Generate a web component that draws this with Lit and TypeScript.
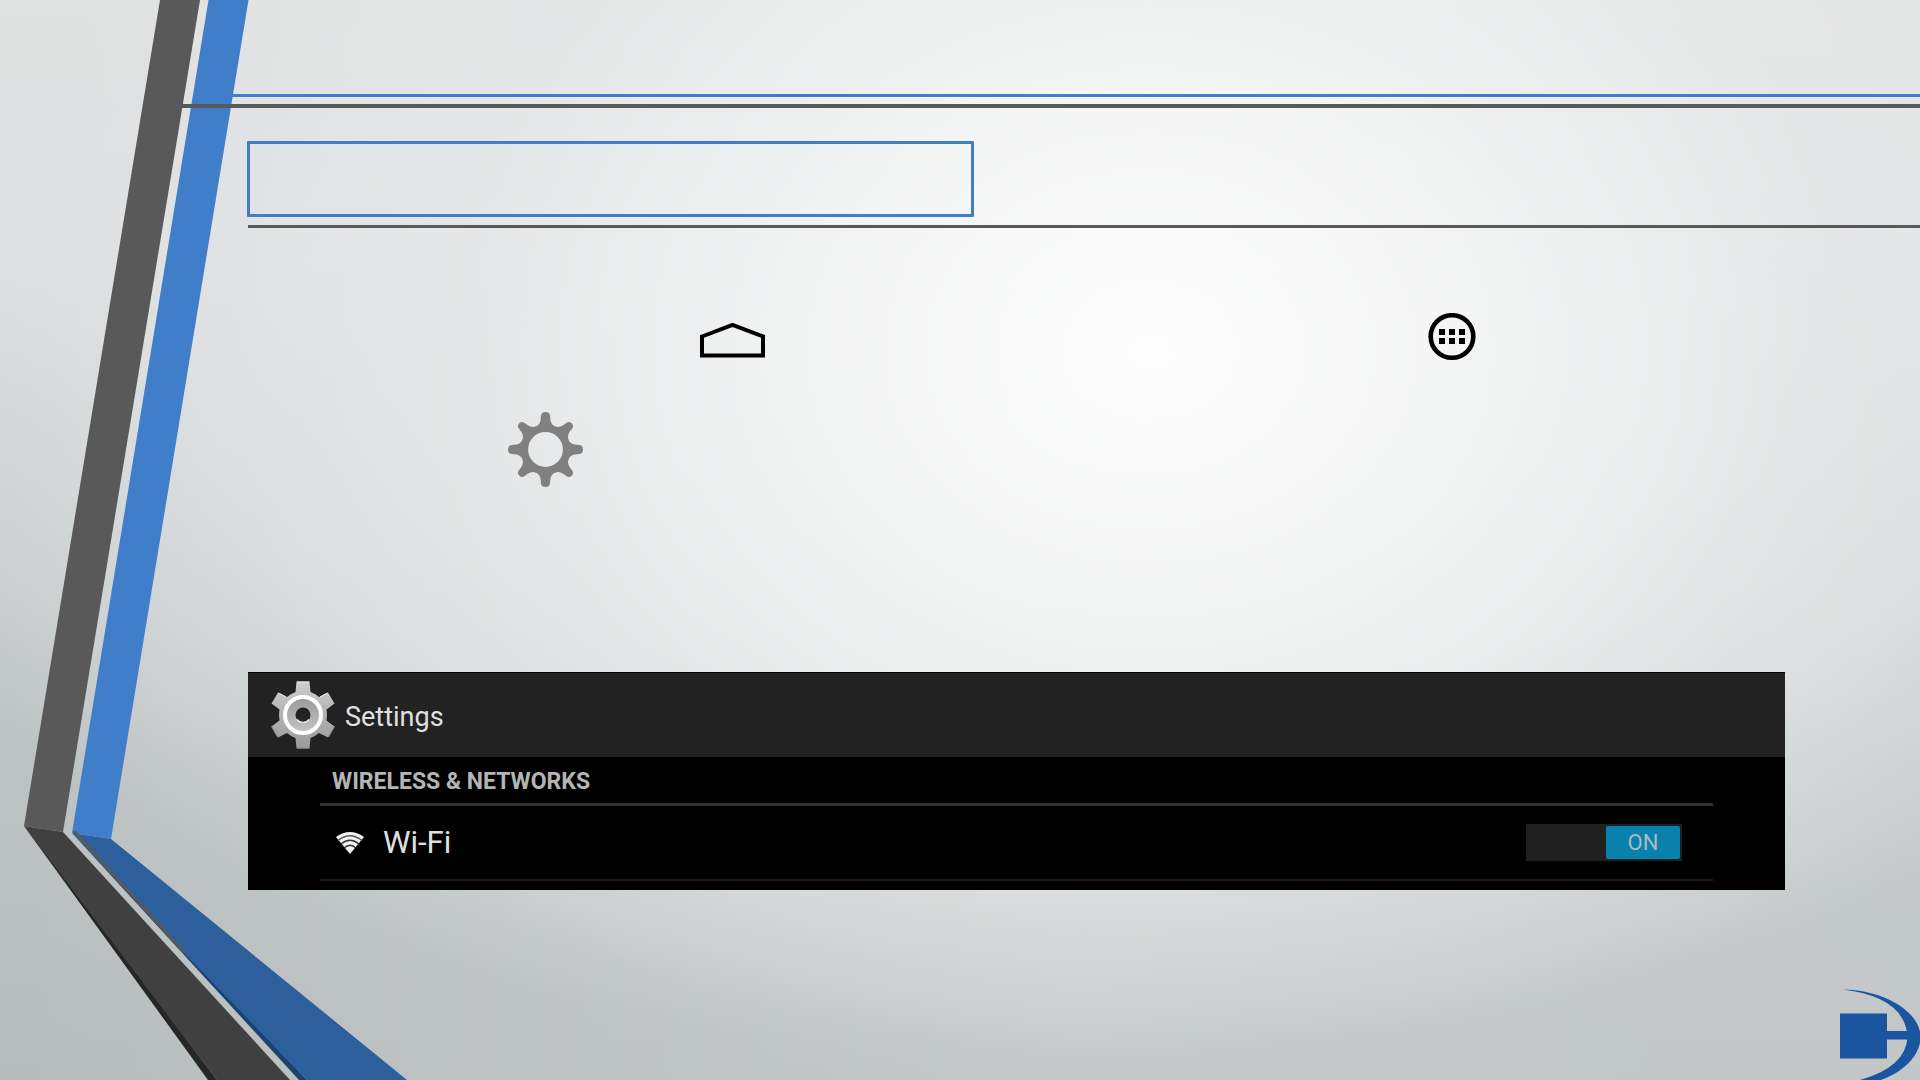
import { LitElement, html, css, svg } from "lit";
import { customElement, state } from "lit/decorators.js";

const RIM_TEETH = [120, 180, 240];
const COG_TEETH = [0, 45, 90, 135, 180, 225, 270, 315];

@customElement("settings-panel")
export class SettingsPanel extends LitElement {
  @state() private wifi = true;

  static styles = css`
    :host {
      display: block;
      background: #000;
      color: #e0e0e0;
      font-family: Roboto, "Liberation Sans", sans-serif;
    }
    .bar {
      display: flex;
      align-items: center;
      gap: 10px;
      height: 84px;
      padding-left: 23px;
      border-top: 1px solid #000;
      background: #222;
    }
    .gear {
      display: block;
      width: 64px;
      height: 68px;
    }
    .title {
      margin: 0;
      padding-top: 4px;
      font-size: 27px;
      line-height: 32px;
      font-weight: 400;
    }
    .list {
      padding: 0 72px 9px;
    }
    .section {
      margin: 0;
      padding: 10px 12px 6px;
      border-bottom: 3px solid #303030;
      color: #b4b4b4;
      font-size: 23px;
      line-height: 30px;
      font-weight: 700;
    }
    .row {
      display: flex;
      align-items: center;
      height: 73px;
      padding: 0 31px 0 16px;
      border-bottom: 2px solid #1c1c1c;
    }
    .wifi {
      display: block;
      width: 28px;
      height: 24px;
    }
    .name {
      flex: 1;
      padding-left: 19px;
      font-size: 31px;
      line-height: 36px;
    }
    .switch {
      display: flex;
      width: 152px;
      height: 33px;
      padding: 2px;
      background: #202020;
      cursor: pointer;
    }
    .switch input {
      appearance: none;
      width: 0;
      height: 0;
      margin: 0;
    }
    .thumb {
      width: 74px;
      border-radius: 2px;
      background: #444;
      color: #a9bac2;
      font-size: 22px;
      line-height: 34px;
      text-align: center;
    }
    .switch input:checked + .thumb {
      margin-left: auto;
      background: #0882ad;
    }
  `;

  private toggle(e: Event) {
    this.wifi = (e.target as HTMLInputElement).checked;
  }

  render() {
    return html`
      <header class="bar">
        <svg class="gear" viewBox="-32 -34 64 68" aria-hidden="true">
          <defs>
            <linearGradient id="steel" gradientUnits="userSpaceOnUse" x1="0" y1="-34" x2="0" y2="34">
              <stop offset="0" stop-color="#cdcdcd" />
              <stop offset="1" stop-color="#999" />
            </linearGradient>
            <linearGradient id="hub" x1="0" y1="0" x2="0" y2="1">
              <stop offset="0" stop-color="#999" />
              <stop offset="1" stop-color="#c4c4c4" />
            </linearGradient>
            <mask id="bore">
              <rect x="-34" y="-34" width="68" height="68" fill="#fff" />
              <circle r="7.5" fill="#000" />
            </mask>
          </defs>
          <g mask="url(#bore)">
            <path
              fill="url(#steel)"
              d="M-6.500-33.500H6.500L7.500-23Q12-21.500 16-18L25-22.500L31.500-11.500L23.500-5.500Q24.500 0 23.500 5.500L31.500 11.500L25 22.500L16 18Q12 21.500 7.500 23L6.500 33.500H-6.500L-7.500 23Q-12 21.500-16 18L-25 22.500L-31.500 11.500L-23.500 5.500Q-24.500 0-23.500-5.500L-31.500-11.500L-25-22.500L-16-18Q-12-21.500-7.500-23Z"
            />
            ${RIM_TEETH.map(
              (a) => svg`<path d="M-6-33H6" stroke="#8c8c8c" stroke-width="1" transform="rotate(${a})" />`
            )}
            <path d="M-6-33H6M-24.500-22L-17-18M24.500-22L17-18" stroke="#eee" stroke-width="1" />
            <circle r="18" fill="url(#hub)" stroke="#fff" stroke-width="4" />
          </g>
          <path d="M-6 4.500A7.500 7.500 0 0 0 6 4.500" fill="none" stroke="#e4e4e4" stroke-width="1.500" />
        </svg>
        <h1 class="title">Settings</h1>
      </header>
      <div class="list">
        <h2 class="section">WIRELESS &amp; NETWORKS</h2>
        <div class="row">
          <svg class="wifi" viewBox="0 0 28 24" aria-hidden="true">
            <path d="M0 6Q14-4 28 6L14 23Z" fill="#f2f2f2" />
            <path d="M2 9.500Q14 0 26 9.500" fill="none" stroke="#555" stroke-width="1.500" />
            <path d="M5 13Q14 5.500 23 13M8 17Q14 11.500 20 17" fill="none" stroke="#333" stroke-width="1.500" />
          </svg>
          <span class="name" id="wifi-name">Wi-Fi</span>
          <label class="switch">
            <input type="checkbox" aria-labelledby="wifi-name" .checked=${this.wifi} @change=${this.toggle} />
            <span class="thumb">${this.wifi ? "ON" : "OFF"}</span>
          </label>
        </div>
      </div>
    `;
  }
}

@customElement("app-root")
export class AppRoot extends LitElement {
  static styles = css`
    :host {
      display: block;
    }
    .slide {
      position: relative;
      display: flex;
      flex-direction: column;
      box-sizing: border-box;
      min-height: 100vh;
      padding-top: 94px;
      overflow: hidden;
      background:
        radial-gradient(
          ellipse 950px 760px at 1150px 350px,
          rgba(255, 255, 255, 0.9) 0%,
          rgba(255, 255, 255, 0.7) 25%,
          rgba(255, 255, 255, 0.4) 47%,
          rgba(255, 255, 255, 0.1) 72%,
          rgba(255, 255, 255, 0) 100%
        ),
        radial-gradient(
          ellipse 1150px 600px at 1080px 430px,
          rgba(227, 229, 230, 1) 0%,
          rgba(227, 229, 230, 0.9) 50%,
          rgba(227, 229, 230, 0.6) 75%,
          rgba(227, 229, 230, 0) 105%
        ),
        linear-gradient(to right, rgba(255, 255, 255, 0), rgba(255, 255, 255, 0.18) 55%, rgba(255, 255, 255, 0.15)),
        linear-gradient(#e0e2e2, #dcdddf 25%, #cbcfcf 46%, #bdc2c2 70%, #b7bcbc);
    }
    .ribbons {
      position: absolute;
      top: 0;
      left: 0;
      width: 410px;
      height: 1080px;
    }
    .rule {
      position: relative;
      flex: none;
      height: 3px;
      background: #595959;
    }
    .rule.accent {
      margin-left: 232px;
      background: #407ec9;
    }
    .rule.heavy {
      height: 4px;
      margin: 7px 0 33px 182px;
    }
    .rule.thin {
      margin: 8px 0 0 248px;
    }
    .caption {
      box-sizing: border-box;
      width: 727px;
      height: 76px;
      margin-left: 247px;
      border: 3px solid #407ec9;
      border-radius: 1px;
    }
    .steps {
      display: flex;
      flex-direction: column;
      gap: 51px;
      padding: 85px 0 185px;
    }
    .step {
      display: flex;
      align-items: center;
      gap: 663px;
      padding-left: 700px;
    }
    .step.second {
      padding-left: 508px;
    }
    svg {
      display: block;
      flex: none;
    }
    .home {
      width: 65px;
      height: 41px;
    }
    .apps {
      width: 48px;
      height: 48px;
    }
    .cog {
      width: 75px;
      height: 75px;
    }
    settings-panel {
      margin: 0 135px 0 248px;
    }
    .foot {
      display: flex;
      justify-content: flex-end;
      margin-top: auto;
    }
    .logo {
      width: 80px;
      height: 92px;
    }
  `;

  render() {
    return html`
      <main class="slide">
        <svg class="ribbons" viewBox="0 0 410 1080" aria-hidden="true">
          <path d="M160 0H200L63 832L24 826Z" fill="#595959" />
          <path d="M208.500 0H248.500L111 839L72 833Z" fill="#407ec9" />
          <path d="M24 826L50 858L217 1080H208Z" fill="#262626" />
          <path d="M24 826L63 832L290 1080H217Z" fill="#404040" />
          <path d="M72 833L307 1080H299Z" fill="#1c4270" />
          <path d="M72 833L111 839L407 1080H307L184 953Z" fill="#2c5f9c" />
          <path d="M74 831L185 953" stroke="#595959" stroke-width="3" />
        </svg>
        <div class="rule accent"></div>
        <div class="rule heavy"></div>
        <div class="caption"></div>
        <div class="rule thin"></div>
        <section class="steps">
          <div class="step">
            <svg class="home" viewBox="0 0 65 41" role="img" aria-label="Home">
              <path d="M2 19.500L32.500 8L63 19.500V38.500H2Z" fill="none" stroke="#000" stroke-width="4" />
            </svg>
            <svg class="apps" viewBox="0 0 48 48" role="img" aria-label="All apps">
              <circle cx="24" cy="23.500" r="21.300" fill="none" stroke="#000" stroke-width="4.600" />
              <path d="M11 16h6v6h-6zM21 16h6v6h-6zM31 16h6v6h-6zM11 25h6v6h-6zM21 25h6v6h-6zM31 25h6v6h-6z" />
            </svg>
          </div>
          <div class="step second">
            <svg class="cog" viewBox="-37.500 -37.500 75 75" role="img" aria-label="Settings">
              <g fill="#808080">
                ${COG_TEETH.map(
                  (a) => svg`<path transform="rotate(${a})"
                    d="${a % 90 === 0
                      ? "M-4.500-34Q-4-37.500 0-37.500T4.500-34L5-29Q6-24 11-22.500L8-20H-8L-11-22.500Q-6-24-5-29Z"
                      : "M-4-34Q-3.500-37 0-37T4-34L4.500-30Q5.500-25 9.500-23L8-20H-8L-9.500-23Q-5.500-25-4.500-30Z"}" />`
                )}
              </g>
              <circle r="20.800" fill="none" stroke="#808080" stroke-width="6.800" />
            </svg>
          </div>
        </section>
        <settings-panel></settings-panel>
        <footer class="foot">
          <svg class="logo" viewBox="0 0 80 92" role="img" aria-label="Company logo">
            <path d="M0 25.500H47V43H68V51.500H47V70.500H0Z" fill="#1b559f" />
            <path d="M3 1.500C40 1.500 80.500 22 80.500 49C80.500 68 63 84 41 92H20Q66 79 67.500 49Q65 9 3 1.500Z" fill="#1b559f" />
          </svg>
        </footer>
      </main>
    `;
  }
}
